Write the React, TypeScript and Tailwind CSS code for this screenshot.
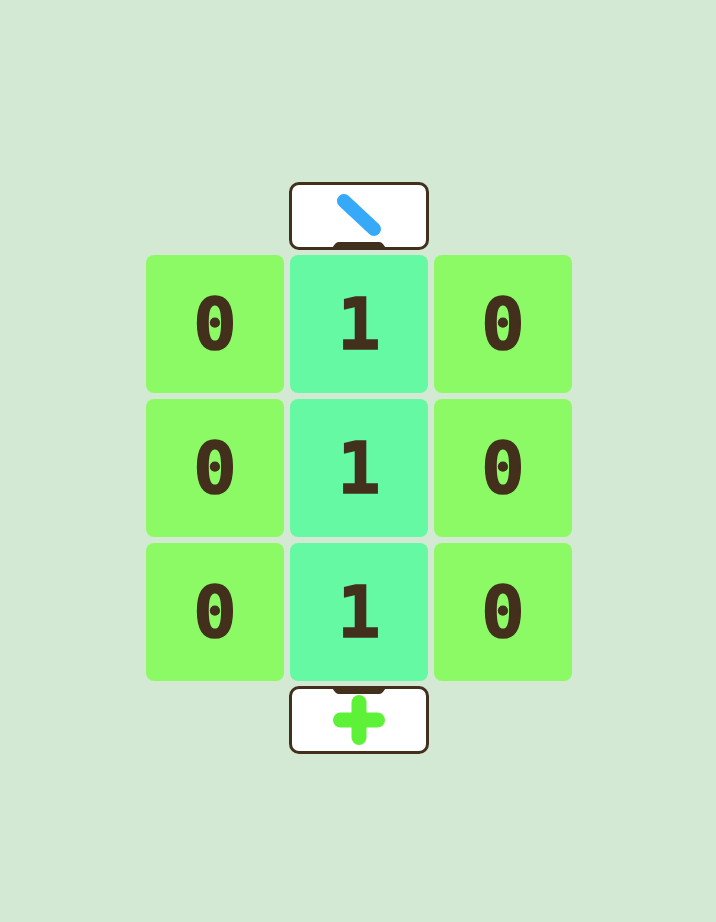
import React from "react";

const grid = [
  [0, 1, 0],
  [0, 1, 0],
  [0, 1, 0],
];

function Notch({ top }: { top?: boolean }) {
  return (
    <svg
      width="56"
      height="7"
      viewBox="0 0 56 7"
      className={`absolute left-1/2 -translate-x-1/2 ${top ? "top-[-1px] rotate-180" : "bottom-[-1px]"}`}
    >
      <path d="M0 7 C3 7 3 1 8 1 L48 1 C53 1 53 7 56 7 Z" fill="#42301d" />
    </svg>
  );
}

export default function App() {
  return (
    <div
      className="min-h-[922px] w-full bg-[#d3e9d3] flex flex-col items-center pt-[182px] pl-[2px]"
      style={{ fontFamily: '"DejaVu Sans Mono", monospace' }}
    >
      <div className="relative w-[140px] h-[68px] rounded-[10px] border-[3px] border-[#42301d] bg-white">
        <svg width="140" height="68" viewBox="0 0 140 68" className="absolute left-[-3px] top-[-3px]">
          <line x1="55" y1="19" x2="85" y2="47" stroke="#36a9f9" strokeWidth="14" strokeLinecap="round" />
        </svg>
        <Notch />
      </div>
      <div className="grid grid-cols-[repeat(3,138px)] gap-[6px] mt-[5px]">
        {grid.flat().map((v, i) => (
          <div
            key={i}
            className={`h-[138px] rounded-[8px] flex items-center justify-center text-[72px] font-bold text-[#42301d] [-webkit-text-stroke:1.5px_#42301d] ${
              v === 1 ? "bg-[#66f9a4]" : "bg-[#8bfa65]"
            }`}
          >
            {v}
          </div>
        ))}
      </div>
      <div className="relative w-[140px] h-[68px] mt-[5px] rounded-[10px] border-[3px] border-[#42301d] bg-white">
        <svg width="140" height="68" viewBox="0 0 140 68" className="absolute left-[-3px] top-[-3px]">
          <line x1="70" y1="16.5" x2="70" y2="51.5" stroke="#5df237" strokeWidth="15" strokeLinecap="round" />
          <line x1="51.5" y1="34" x2="88.5" y2="34" stroke="#5df237" strokeWidth="15" strokeLinecap="round" />
        </svg>
        <Notch top />
      </div>
    </div>
  );
}
